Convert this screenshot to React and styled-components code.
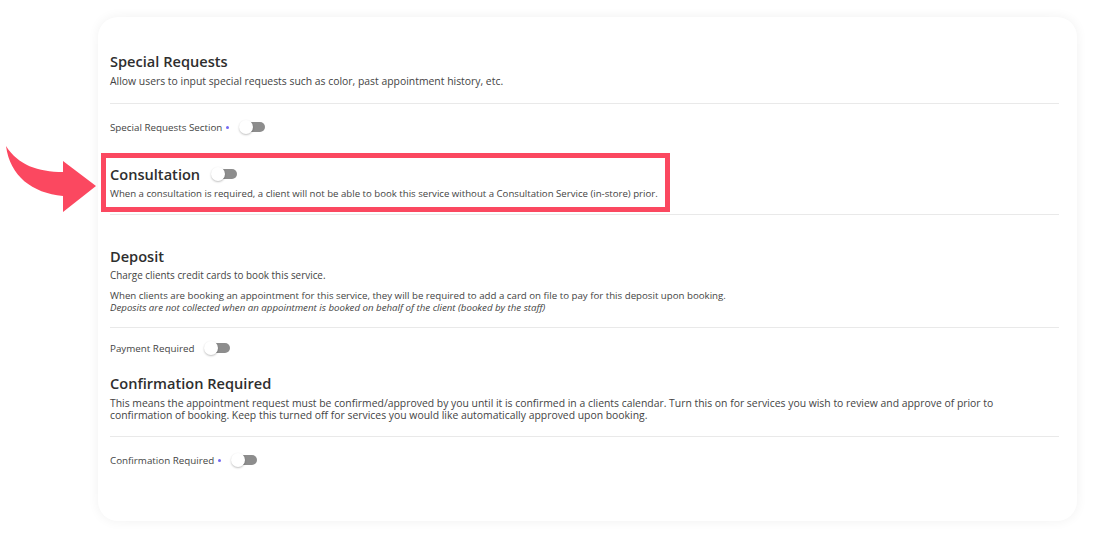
import React from "react";
import styled, { createGlobalStyle } from "styled-components";

const Global = createGlobalStyle`
  html, body { margin: 0; padding: 0; background: #ffffff; }
  body { font-family: "Open Sans", "Liberation Sans", sans-serif; color: #3a3a3a; }
  * { box-sizing: border-box; }
`;

const Page = styled.div`
  position: relative;
  width: 1093px;
  height: 536px;
  padding: 17px 0 0 98px;
`;

const Card = styled.div`
  width: 979px;
  height: 504px;
  background: #fff;
  border-radius: 20px;
  box-shadow: 0 0 12px rgba(0, 0, 0, 0.06);
  padding: 35px 18px 0 12px;
`;

const Heading = styled.h2`
  margin: ${(p) => p.$mt || 0}px 0 0 0;
  font-size: 14.6px;
  line-height: 18px;
  font-weight: 600;
  color: #2e2e2e;
  display: flex;
  align-items: center;
`;

const Desc = styled.p`
  margin: ${(p) => p.$mt || 0}px 0 0 0;
  font-size: ${(p) => p.$size || 9.9}px;
  line-height: 12px;
  color: #444;
  white-space: nowrap;
  font-style: ${(p) => (p.$italic ? "italic" : "normal")};
`;

const Divider = styled.hr`
  margin: ${(p) => p.$mt || 0}px 0 0 0;
  border: 0;
  height: 1px;
  background: #e9e9e9;
`;

const Row = styled.div`
  margin-top: ${(p) => p.$mt || 0}px;
  height: 14px;
  display: flex;
  align-items: center;
`;

const Label = styled.span`
  font-size: 9.8px;
  color: #444;
`;

const Dot = styled.span`
  width: 3px;
  height: 3px;
  border-radius: 50%;
  background: #7468f2;
  margin-left: 4px;
  margin-top: 1px;
`;

const Toggle = styled.span`
  position: relative;
  display: inline-block;
  width: 26px;
  height: 14px;
  margin-left: ${(p) => p.$ml}px;
  flex: none;
  &::before {
    content: "";
    position: absolute;
    left: 5px;
    right: 0;
    top: 2px;
    height: 10px;
    border-radius: 5px;
    background: #8d8d8d;
  }
  &::after {
    content: "";
    position: absolute;
    left: 0;
    top: 0;
    width: 14px;
    height: 14px;
    border-radius: 50%;
    background: #fff;
    box-shadow: 0 1px 2px rgba(0, 0, 0, 0.25);
  }
`;

const Highlight = styled.div`
  margin: 19px 0 0 -9px;
  width: 569px;
  border: 5px solid #fb4860;
  padding: 7px 4px 7px 4px;
`;

const Arrow = styled.svg`
  position: absolute;
  left: 0;
  top: 0;
  pointer-events: none;
`;

export default function App() {
  return (
    <>
      <Global />
      <Page>
        <Card>
          <Heading>Special Requests</Heading>
          <Desc $mt={5} $size={10.4}>
            Allow users to input special requests such as color, past appointment history, etc.
          </Desc>
          <Divider $mt={16} />
          <Row $mt={16}>
            <Label>Special Requests Section</Label>
            <Dot />
            <Toggle $ml={10} />
          </Row>

          <Highlight>
            <Heading>
              Consultation
              <Toggle $ml={11} />
            </Heading>
            <Desc $mt={5} $size={9.65}>
              When a consultation is required, a client will not be able to book this service without a
              Consultation Service (in-store) prior.
            </Desc>
          </Highlight>
          <Divider $mt={2} />

          <Heading $mt={32}>Deposit</Heading>
          <Desc $mt={4}>Charge clients credit cards to book this service.</Desc>
          <Desc $mt={9} $size={9.7}>
            When clients are booking an appointment for this service, they will be required to add a card on
            file to pay for this deposit upon booking.
          </Desc>
          <Desc $italic $size={9.7}>
            Deposits are not collected when an appointment is booked on behalf of the client (booked by the
            staff)
          </Desc>
          <Divider $mt={13} />
          <Row $mt={13}>
            <Label>Payment Required</Label>
            <Toggle $ml={10} />
          </Row>

          <Heading $mt={19}>Confirmation Required</Heading>
          <Desc $mt={5} $size={10.4}>
            This means the appointment request must be confirmed/approved by you until it is confirmed in a
            clients calendar. Turn this on for services you wish to review and approve of prior to
            <br />
            confirmation of booking. Keep this turned off for services you would like automatically approved
            upon booking.
          </Desc>
          <Divider $mt={15} />
          <Row $mt={16}>
            <Label>Confirmation Required</Label>
            <Dot />
            <Toggle $ml={10} />
          </Row>
        </Card>
        <Arrow width="110" height="230" viewBox="0 0 110 230">
          <path
            d="M6,146 C18,165 38,172 63,172 L63,161 L96,186 L63,212 L63,196 C32,193 10,176 6,146 Z"
            fill="#fb4860"
          />
        </Arrow>
      </Page>
    </>
  );
}
